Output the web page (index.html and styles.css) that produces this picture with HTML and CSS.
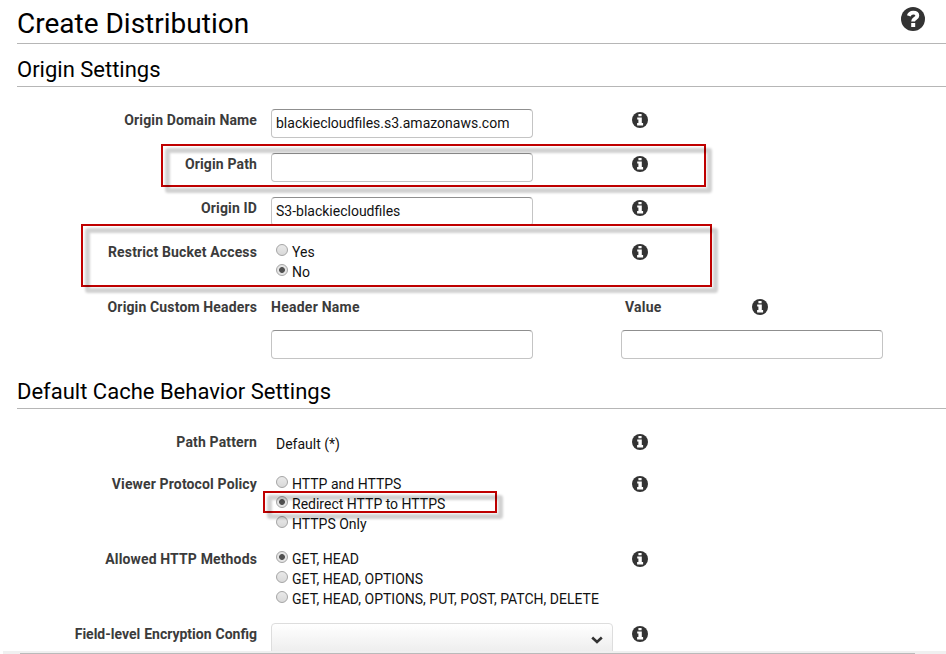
FILE: index.html
```html
<!DOCTYPE html>
<html lang="en">
<head>
<meta charset="utf-8">
<title>Create Distribution</title>
<link rel="stylesheet" href="styles.css">
</head>
<body>
<svg class="defs" width="0" height="0">
  <symbol id="info" viewBox="0 0 16 16">
    <circle cx="8" cy="8" r="8" fill="#333"/>
    <path d="M6.400 2h3.200v2.200H6.400zM5.200 5.400h4.600v5.700h1.300v2.300H5.100v-2.300h1.300V7.500H5.200z" fill="#fff"/>
  </symbol>
</svg>
<main class="page">
  <header class="title-bar">
    <h1>Create Distribution</h1>
    <svg class="help" viewBox="0 0 24 24"><circle cx="12" cy="12" r="12" fill="#333"/><path d="M7.800 8.800C8.500 6.600 10 5.600 12.200 5.600c2.500 0 4.100 1.100 4.100 3.100 0 2.900-4.200 2.500-4.200 5.900" fill="none" stroke="#fff" stroke-width="3.900"/><path d="M10.200 16h4v4h-4z" fill="#fff"/></svg>
  </header>
  <h2>Origin Settings</h2>
  <section class="origin">
    <div class="row"><label>Origin Domain Name</label><div class="input"><span>blackiecloudfiles.s3.amazonaws.com</span></div><svg class="info"><use href="#info"/></svg></div>
    <div class="row"><label>Origin Path</label><div class="input"></div><svg class="info"><use href="#info"/></svg><i class="mark mark-path"></i></div>
    <div class="row"><label>Origin ID</label><div class="input"><span>S3-blackiecloudfiles</span></div><svg class="info"><use href="#info"/></svg></div>
    <div class="row restrict"><label>Restrict Bucket Access</label>
      <div class="radios"><div><b class="radio"></b><span>Yes</span></div><div><b class="radio on"></b><span>No</span></div></div>
      <svg class="info"><use href="#info"/></svg><i class="mark mark-restrict"></i></div>
    <div class="row headers"><label>Origin Custom Headers</label>
      <div class="pair"><div class="pair-head"><strong>Header Name</strong></div><div class="input"></div></div>
      <div class="pair value"><div class="pair-head"><strong>Value</strong><svg class="info"><use href="#info"/></svg></div><div class="input"></div></div>
    </div>
  </section>
  <h2 class="cache-title">Default Cache Behavior Settings</h2>
  <section class="cache">
    <div class="row pattern"><label>Path Pattern</label><div class="plain"><span>Default (*)</span></div><svg class="info"><use href="#info"/></svg></div>
    <div class="row triple"><label>Viewer Protocol Policy</label>
      <div class="radios"><div><b class="radio"></b><span>HTTP and HTTPS</span></div><div><b class="radio on"></b><span>Redirect HTTP to HTTPS</span></div><div><b class="radio"></b><span>HTTPS Only</span></div></div>
      <svg class="info"><use href="#info"/></svg><i class="mark mark-redirect"></i></div>
    <div class="row triple"><label>Allowed HTTP Methods</label>
      <div class="radios"><div><b class="radio on"></b><span>GET, HEAD</span></div><div><b class="radio"></b><span>GET, HEAD, OPTIONS</span></div><div><b class="radio"></b><span>GET, HEAD, OPTIONS, PUT, POST, PATCH, DELETE</span></div></div>
      <svg class="info"><use href="#info"/></svg></div>
    <div class="row last"><label>Field-level Encryption Config</label><div class="select"><svg viewBox="0 0 12 8"><path d="M1.200 1.500 6 6l4.800-4.500" fill="none" stroke="#333" stroke-width="2.600"/></svg></div><svg class="info"><use href="#info"/></svg></div>
  </section>
  <footer class="bottom"><div></div></footer>
</main>
</body>
</html>
```

FILE: styles.css
```css
* { box-sizing: border-box; }
body { margin: 0; background: #fff; color: #111; font: 14px/20px Roboto, "Liberation Sans", sans-serif; }
.defs { position: absolute; }
.page { height: 654px; overflow: hidden; display: flex; flex-direction: column; }
h1, h2 { margin: 0; font-weight: 400; color: #000; }
.title-bar { display: flex; justify-content: space-between; margin-left: 17px; height: 44px; padding-right: 21px; border-bottom: 1px solid #b6b6b6; flex: none; }
h1 { font-size: 28px; line-height: 48px; white-space: nowrap; }
.help { width: 24px; height: 24px; margin-top: 7px; }
h2 { margin-left: 17px; height: 43px; font-size: 22px; line-height: 51px; border-bottom: 1px solid #b6b6b6; flex: none; }
.origin { padding-top: 22px; height: 279px; flex: none; }
.cache-title { line-height: 52px; }
.cache { padding-top: 22px; height: 242px; overflow: hidden; flex: none; }
.row { position: relative; display: grid; grid-template-columns: 257px 361px 16px; column-gap: 0; height: 44px; align-items: start; }
.row > label { justify-self: end; }
.row > :nth-child(2) { margin-left: 14px; }
.row > .info { margin-left: 14px; }
label, strong { font-weight: 700; font-size: 14px; line-height: 22px; letter-spacing: .14px; color: #3b3b3b; white-space: nowrap; }
.last label { letter-spacing: 0; word-spacing: .5px; }
strong { letter-spacing: .25px; }
.info { width: 16px; height: 16px; margin-top: 3px; }
.input { width: 262px; height: 29px; border: 1px solid #c4c4c4; border-top-color: #8f8f8f; border-radius: 4px; padding-left: 4px; line-height: 27px; white-space: nowrap; }
.restrict { height: 55px; }
.radios { padding-top: 1px; white-space: nowrap; }
.radios > div { display: flex; height: 20px; padding-left: 5px; line-height: 21px; }
.radio { width: 12px; height: 12px; margin: 2px 4px 0 0; border: 1px solid #a5a5a5; border-radius: 50%; background: linear-gradient(#e9e9e9, #d9d9d9); flex: none; }
.radio.on { background: radial-gradient(circle, #505050 0 2.5px, #e4e4e4 3.3px); }
.row.headers { grid-template-columns: 257px 364px 262px; }
.pair-head { display: flex; height: 34px; }
.pair.value .pair-head { padding-left: 4px; }
.pair.value strong { width: 37px; }
.pair.value .info { margin-left: 90px; }
.pattern { height: 42px; }
.plain { padding-left: 5px; line-height: 26px; }
.triple { height: 75px; }
.select { width: 342px; height: 32px; border: 1px solid #ddd; border-radius: 4px; background: linear-gradient(#fff, #ececec); display: flex; justify-content: flex-end; padding: 12px 9px 0 0; }
.select svg { width: 12px; height: 8px; }
.bottom { height: 3px; margin-left: 3px; padding: 2px 31px 0 17px; background: #f0f0f0; flex: none; }
.bottom div { height: 1px; background: #bababa; }
.mark { position: absolute; border: 2px solid #c00000; z-index: 1; pointer-events: none; }
.mark::after { content: ""; position: absolute; inset: 2px -8px -8px 2px; border: 5px solid rgba(0, 0, 0, .18); border-radius: 3px; filter: blur(1.2px); z-index: -1; }
.mark-path { left: 161px; top: -9px; width: 545px; height: 43px; }
.mark-restrict { left: 81px; top: -17px; width: 631px; height: 63px; }
.mark-redirect { left: 263px; top: 18px; width: 234px; height: 22px; }
```
